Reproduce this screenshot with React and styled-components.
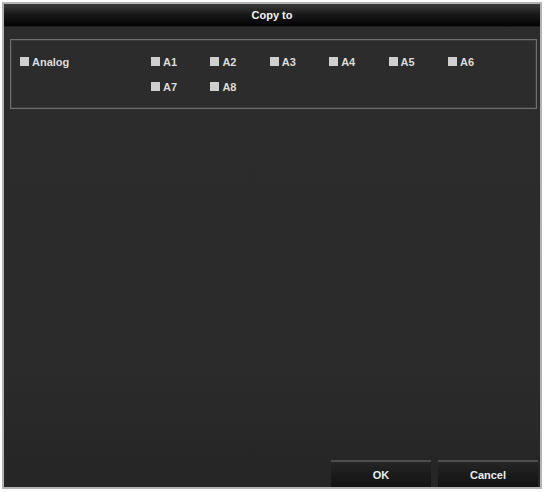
import React from 'react';
import styled, { createGlobalStyle } from 'styled-components';

const GlobalStyle = createGlobalStyle`
    body {
        margin: 0;
        background: #ffffff;
        font-family: 'Liberation Sans', Arial, sans-serif;
    }
`;

const Page = styled.div`
    width: 545px;
    height: 492px;
    padding: 2px 3px 3px 2px;
    box-sizing: border-box;
`;

const Dialog = styled.div`
    display: flex;
    flex-direction: column;
    height: 100%;
    border: 2px solid #b4b4b4;
    box-sizing: border-box;
    background: #2b2b2b;
`;

const TitleBar = styled.div`
    height: 22px;
    display: flex;
    align-items: center;
    justify-content: center;
    background: linear-gradient(#3c3c3c 0%, #1a1a1a 45%, #030303 100%);
    color: #f2f2f2;
    font-size: 11px;
    font-weight: bold;
    border-bottom: 1px solid #1c1c1c;
`;

const Body = styled.div`
    flex: 1;
    padding: 12px 3px 0 6px;
    background: linear-gradient(#2c2c2c 0%, #2b2b2b 80%, #262626 100%);
`;

const GroupBox = styled.div`
    height: 70px;
    box-sizing: border-box;
    border: 1px solid #707070;
    box-shadow: inset 0 0 0 1px #3a3a3a;
    padding: 17px 0 0 9px;
    display: grid;
    grid-template-columns: 131px 1fr;
    align-items: start;
    align-content: start;
`;

const Channels = styled.div`
    display: grid;
    grid-template-columns: repeat(6, 59.4px);
    grid-auto-rows: 9px;
    row-gap: 16px;
    align-content: start;
`;

const Check = styled.label`
    display: flex;
    align-items: center;
    gap: 3px;
    height: 9px;
    color: #dcdcdc;
    font-size: 11px;
    font-weight: bold;
`;

const Box = styled.span`
    width: 9px;
    height: 9px;
    background: #cfcfcf;
    flex: none;
`;

const Footer = styled.div`
    height: 30px;
    display: flex;
    justify-content: flex-end;
    align-items: flex-end;
    gap: 7px;
    padding-right: 2px;
    background: #262626;
`;

const Button = styled.div`
    width: 100px;
    height: 27px;
    box-sizing: border-box;
    display: flex;
    align-items: center;
    justify-content: center;
    border-top: 2px solid #4e4e4e;
    background: linear-gradient(#252525, #111111);
    color: #ececec;
    font-size: 11px;
    font-weight: bold;
`;

const channels = ['A1', 'A2', 'A3', 'A4', 'A5', 'A6', 'A7', 'A8'];

function CheckItem({ label }) {
    return (
        <Check>
            <Box />
            {label}
        </Check>
    );
}

export default function App() {
    return (
        <Page>
            <GlobalStyle />
            <Dialog>
                <TitleBar>Copy to</TitleBar>
                <Body>
                    <GroupBox>
                        <CheckItem label="Analog" />
                        <Channels>
                            {channels.map((c) => (
                                <CheckItem key={c} label={c} />
                            ))}
                        </Channels>
                    </GroupBox>
                </Body>
                <Footer>
                    <Button>OK</Button>
                    <Button>Cancel</Button>
                </Footer>
            </Dialog>
        </Page>
    );
}
